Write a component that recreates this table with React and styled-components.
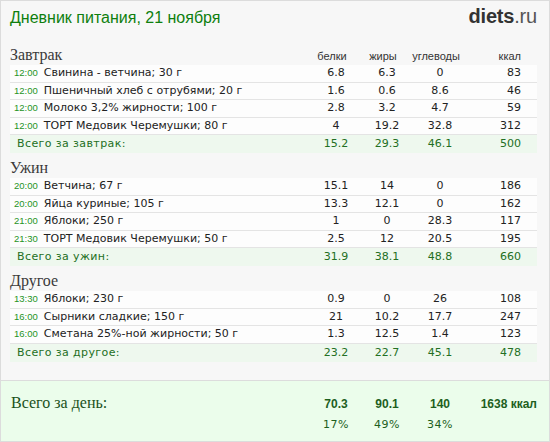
import styled, { createGlobalStyle } from "styled-components";

const GlobalStyle = createGlobalStyle`
  html, body {
    margin: 0;
    padding: 0;
    background: #ffffff;
  }
  * {
    box-sizing: border-box;
  }
`;

const COLS = "1fr 52px 50px 56px 69px";

const Page = styled.div`
  width: 550px;
  height: 442px;
  border: 1px solid #dcdcdc;
  background: #f7f7f7;
  display: flex;
  flex-direction: column;
  font-family: "DejaVu Sans", Verdana, sans-serif;
`;

const Header = styled.div`
  height: 39px;
  padding: 5px 12px 0 9px;
  display: flex;
  justify-content: space-between;
  align-items: baseline;
`;

const Title = styled.div`
  font-family: "Liberation Sans", Arial, sans-serif;
  font-size: 16px;
  line-height: 20px;
  color: #0e7f0e;
`;

const Logo = styled.div`
  font-family: "Liberation Sans", Arial, sans-serif;
  font-size: 20px;
  line-height: 20px;
  color: #333333;
  font-weight: bold;
  letter-spacing: -0.2px;
  span {
    font-weight: normal;
    color: #555555;
  }
`;

const Content = styled.div`
  flex: 1;
  padding: 0 12px 0 9px;
`;

const SectionHead = styled.div`
  display: grid;
  grid-template-columns: ${COLS};
  height: 25px;
  align-items: end;
  padding-bottom: 1px;
`;

const SectionTitle = styled.div`
  font-family: "Liberation Serif", "Times New Roman", serif;
  font-size: 16px;
  line-height: 18px;
  color: #3a3a3a;
`;

const ColHead = styled.div`
  font-family: "Liberation Sans", Arial, sans-serif;
  font-size: 11px;
  line-height: 16px;
  color: #333333;
  text-align: ${(p) => (p.$right ? "right" : "center")};
  padding-right: ${(p) => (p.$right ? "16px" : "8px")};
`;

const Row = styled.div`
  display: grid;
  grid-template-columns: ${COLS};
  height: ${(p) => (p.$total ? "18px" : "17.5px")};
  line-height: ${(p) => (p.$total ? "18px" : "16.5px")};
  background: ${(p) => (p.$total ? "#eef8ee" : "#fdfdfd")};
  border-bottom: ${(p) => (p.$total ? "none" : "1px solid #e4e4e4")};
  font-size: 11px;
  color: ${(p) => (p.$total ? "#236f23" : "#222222")};
`;

const NameCell = styled.div`
  padding-left: ${(p) => (p.$total ? "7px" : "4px")};
  white-space: nowrap;
  letter-spacing: ${(p) => (p.$total ? "0.4px" : "0")};
`;

const Time = styled.span`
  font-family: "Liberation Sans", Arial, sans-serif;
  font-size: 9.5px;
  color: #259425;
  margin-right: 6px;
`;

const Num = styled.div`
  text-align: ${(p) => (p.$right ? "right" : "center")};
  padding-right: ${(p) => (p.$right ? "16px" : "0")};
`;

const DayTotal = styled.div`
  height: 61px;
  border-top: 1px solid #dcdcdc;
  background: #ebfdeb;
  padding: 13px 12px 0 9px;
  display: grid;
  grid-template-columns: ${COLS};
  grid-auto-rows: 20px;
  align-items: center;
`;

const DayLabel = styled.div`
  font-family: "Liberation Serif", "Times New Roman", serif;
  font-size: 16px;
  line-height: 18px;
  color: #1a521a;
  padding-left: 1px;
  margin-top: -3px;
`;

const DayNum = styled.div`
  font-family: "Liberation Sans", Arial, sans-serif;
  font-weight: bold;
  font-size: 12px;
  color: #1d5f1d;
  text-align: ${(p) => (p.$right ? "right" : "center")};
`;

const Percent = styled.div`
  font-size: 11px;
  letter-spacing: 0.6px;
  color: #1d5f1d;
  text-align: center;
`;

const sections = [
  {
    title: "Завтрак",
    totalLabel: "Всего за завтрак:",
    total: ["15.2", "29.3", "46.1", "500"],
    items: [
      ["12:00", "Свинина - ветчина; 30 г", "6.8", "6.3", "0", "83"],
      ["12:00", "Пшеничный хлеб с отрубями; 20 г", "1.6", "0.6", "8.6", "46"],
      ["12:00", "Молоко 3,2% жирности; 100 г", "2.8", "3.2", "4.7", "59"],
      ["12:00", "ТОРТ Медовик Черемушки; 80 г", "4", "19.2", "32.8", "312"],
    ],
  },
  {
    title: "Ужин",
    totalLabel: "Всего за ужин:",
    total: ["31.9", "38.1", "48.8", "660"],
    items: [
      ["20:00", "Ветчина; 67 г", "15.1", "14", "0", "186"],
      ["20:00", "Яйца куриные; 105 г", "13.3", "12.1", "0", "162"],
      ["21:00", "Яблоки; 250 г", "1", "0", "28.3", "117"],
      ["21:30", "ТОРТ Медовик Черемушки; 50 г", "2.5", "12", "20.5", "195"],
    ],
  },
  {
    title: "Другое",
    totalLabel: "Всего за другое:",
    total: ["23.2", "22.7", "45.1", "478"],
    items: [
      ["13:30", "Яблоки; 230 г", "0.9", "0", "26", "108"],
      ["16:00", "Сырники сладкие; 150 г", "21", "10.2", "17.7", "247"],
      ["16:00", "Сметана 25%-ной жирности; 50 г", "1.3", "12.5", "1.4", "123"],
    ],
  },
];

export default function App() {
  return (
    <Page>
      <GlobalStyle />
      <Header>
        <Title>Дневник питания, 21 ноября</Title>
        <Logo>
          diets<span>.ru</span>
        </Logo>
      </Header>
      <Content>
        {sections.map((section, i) => (
          <div key={section.title}>
            <SectionHead>
              <SectionTitle>{section.title}</SectionTitle>
              {i === 0 && (
                <>
                  <ColHead>белки</ColHead>
                  <ColHead>жиры</ColHead>
                  <ColHead>углеводы</ColHead>
                  <ColHead $right>ккал</ColHead>
                </>
              )}
            </SectionHead>
            {section.items.map((item, j) => (
              <Row key={j}>
                <NameCell>
                  <Time>{item[0]}</Time>
                  {item[1]}
                </NameCell>
                <Num>{item[2]}</Num>
                <Num>{item[3]}</Num>
                <Num>{item[4]}</Num>
                <Num $right>{item[5]}</Num>
              </Row>
            ))}
            <Row $total>
              <NameCell $total>{section.totalLabel}</NameCell>
              <Num>{section.total[0]}</Num>
              <Num>{section.total[1]}</Num>
              <Num>{section.total[2]}</Num>
              <Num $right>{section.total[3]}</Num>
            </Row>
          </div>
        ))}
      </Content>
      <DayTotal>
        <DayLabel>Всего за день:</DayLabel>
        <DayNum>70.3</DayNum>
        <DayNum>90.1</DayNum>
        <DayNum>140</DayNum>
        <DayNum $right>1638 ккал</DayNum>
        <div />
        <Percent>17%</Percent>
        <Percent>49%</Percent>
        <Percent>34%</Percent>
        <div />
      </DayTotal>
    </Page>
  );
}
